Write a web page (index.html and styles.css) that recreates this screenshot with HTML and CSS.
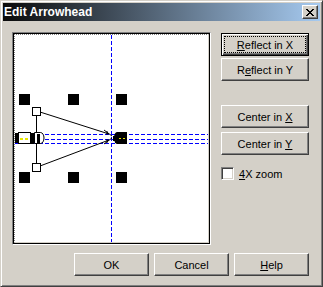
FILE: index.html
```html
<!DOCTYPE html>
<html lang="en">
<head>
    <meta charset="UTF-8">
    <title>Edit Arrowhead</title>
    <link rel="stylesheet" href="styles.css">
</head>
<body>
    <div class="window">
        <div class="titlebar">
            <span class="title">Edit Arrowhead</span>
            <button class="close">
                <svg width="8" height="7" viewBox="0 0 8 7">
                    <path d="M0 0h2v1H0zM6 0h2v1H6zM1 1h2v1H1zM5 1h2v1H5zM2 2h4v1H2zM3 3h2v1H3zM2 4h4v1H2zM1 5h2v1H1zM5 5h2v1H5zM0 6h2v1H0zM6 6h2v1H6z" fill="#000"/>
                </svg>
            </button>
        </div>

        <div class="main">
            <div class="frame">
                <div class="canvas">
                    <div class="paper">
                        <svg width="193" height="207" viewBox="0 0 193 207" shape-rendering="crispEdges">
                            <defs>
                                <pattern id="dash-h" width="6" height="1" patternUnits="userSpaceOnUse">
                                    <rect width="4" height="1" fill="#0000ff"/>
                                </pattern>
                                <pattern id="dash-v" width="1" height="6" patternUnits="userSpaceOnUse">
                                    <rect width="1" height="4" fill="#0000ff"/>
                                </pattern>
                            </defs>
                            <!-- guides -->
                            <rect x="96" y="0" width="1" height="207" fill="url(#dash-v)"/>
                            <rect x="0" y="99" width="193" height="1" fill="url(#dash-h)"/>
                            <rect x="0" y="104" width="193" height="1" fill="url(#dash-h)"/>
                            <rect x="0" y="108" width="193" height="1" fill="url(#dash-h)"/>
                            <!-- handles -->
                            <g fill="#000">
                                <rect x="4" y="59" width="11" height="11"/>
                                <rect x="53" y="59" width="11" height="11"/>
                                <rect x="101" y="59" width="11" height="11"/>
                                <rect x="4" y="137" width="11" height="11"/>
                                <rect x="53" y="137" width="11" height="11"/>
                                <rect x="101" y="137" width="11" height="11"/>
                            </g>
                            <!-- arrowhead outline -->
                            <g stroke="#000" fill="none" shape-rendering="auto">
                                <line x1="21.5" y1="80" x2="21.5" y2="128"/>
                                <line x1="25" y1="77" x2="94" y2="99"/>
                                <line x1="25" y1="131" x2="94" y2="105"/>
                                <line x1="89" y1="95" x2="97" y2="101"/>
                                <line x1="89" y1="109" x2="97" y2="103"/>
                                <line x1="92" y1="96" x2="92" y2="100"/>
                                <line x1="92" y1="104" x2="92" y2="108"/>
                            </g>
                            <rect x="17.5" y="72.5" width="8" height="8" fill="#fff" stroke="#000"/>
                            <rect x="17.5" y="128.5" width="8" height="8" fill="#fff" stroke="#000"/>
                            <!-- line start -->
                            <rect x="0" y="98" width="3" height="10" fill="#000"/>
                            <rect x="3.5" y="97.5" width="12" height="11" fill="#fff" stroke="#000"/>
                            <line x1="5" y1="103.5" x2="15" y2="103.5" stroke="#e8e800" stroke-width="2" stroke-dasharray="3 2"/>
                            <rect x="15" y="98" width="4" height="11" fill="#000"/>
                            <path d="M19.5 97.5h6a3.5 5.5 0 0 1 0 11h-6z" fill="#fff" stroke="#000" shape-rendering="auto"/>
                            <rect x="22" y="99" width="3" height="9" fill="#000"/>
                            <!-- line end -->
                            <path d="M102 97h10v12h-10a3 6 0 0 1 0-12z" fill="#000" shape-rendering="auto"/>
                            <line x1="104" y1="103.5" x2="112" y2="103.5" stroke="#e8e800" stroke-dasharray="2 2"/>
                            <rect x="98" y="101" width="4" height="5" fill="#000"/>
                        </svg>
                    </div>
                </div>
            </div>

            <div class="side">
                <button class="btn default"><span class="focus"><u>R</u>eflect in X</span></button>
                <button class="btn reflect-y">R<u>e</u>flect in Y</button>
                <button class="btn center-x">Center in <u>X</u></button>
                <button class="btn center-y">Center in <u>Y</u></button>
                <label class="check"><span class="box"></span><span><u>4</u>X zoom</span></label>
            </div>
        </div>

        <div class="actions">
            <button class="btn">OK</button>
            <button class="btn">Cancel</button>
            <button class="btn"><u>H</u>elp</button>
        </div>
    </div>
</body>
</html>
```

FILE: styles.css
```css
body {
    margin: 0;
    font-family: "Liberation Sans", Arial, sans-serif;
    font-size: 11px;
    color: #000;
}
.window {
    width: 323px;
    height: 287px;
    box-sizing: border-box;
    background-color: #d4d0c8;
    border: 1px solid;
    border-color: #d4d0c8 #404040 #404040 #d4d0c8;
    box-shadow: inset 1px 1px #fff, inset -1px -1px #808080;
    padding: 2px;
}
.titlebar {
    height: 18px;
    display: flex;
    align-items: center;
    background: linear-gradient(to right, #0a0a0a, #a6caf0);
}
.title {
    flex: 1;
    padding-left: 1px;
    color: #fff;
    font-weight: bold;
    font-size: 12px;
}
.close {
    width: 16px;
    height: 14px;
    margin-right: 2px;
    padding: 0;
    box-sizing: border-box;
    display: flex;
    align-items: center;
    justify-content: center;
    background-color: #d4d0c8;
    border: 1px solid;
    border-color: #fff #404040 #404040 #fff;
    box-shadow: inset -1px -1px #808080;
}
.main {
    display: flex;
    padding: 11px 0 0 9px;
}
.frame {
    border: 1px solid;
    border-color: #808080 #fff #fff #808080;
}
.canvas {
    border: 1px solid #000;
}
.paper {
    display: flex;
    background-color: #fff;
    border: 1px solid #d4d0c8;
    border-top: 1px dotted #808080;
    border-left: 1px dotted #808080;
}
.side {
    display: flex;
    flex-direction: column;
    margin-left: 10px;
    padding-top: 1px;
    width: 88px;
}
.btn {
    height: 23px;
    padding: 0;
    box-sizing: border-box;
    font-family: inherit;
    font-size: 11px;
    color: #000;
    background-color: #d4d0c8;
    border: 1px solid;
    border-color: #fff #404040 #404040 #fff;
    box-shadow: inset -1px -1px #808080;
}
.btn.default {
    border-color: #000;
    box-shadow: inset 1px 1px #fff, inset -1px -1px #404040, inset -2px -2px #808080;
    display: flex;
    padding: 3px;
}
.focus {
    flex: 1;
    display: flex;
    align-items: center;
    justify-content: center;
    outline: 1px dotted #000;
}
.reflect-y {
    margin-top: 2px;
}
.center-x {
    margin-top: 24px;
}
.center-y {
    margin-top: 4px;
}
.check {
    display: flex;
    align-items: center;
    gap: 5px;
    margin-top: 12px;
}
.box {
    width: 13px;
    height: 13px;
    box-sizing: border-box;
    background-color: #fff;
    border: 1px solid;
    border-color: #808080 #fff #fff #808080;
    box-shadow: inset 1px 1px #404040, inset -1px -1px #d4d0c8;
}
.actions {
    display: flex;
    justify-content: flex-end;
    gap: 5px;
    margin-top: 8px;
    padding-right: 11px;
}
.actions .btn {
    width: 75px;
}
```
